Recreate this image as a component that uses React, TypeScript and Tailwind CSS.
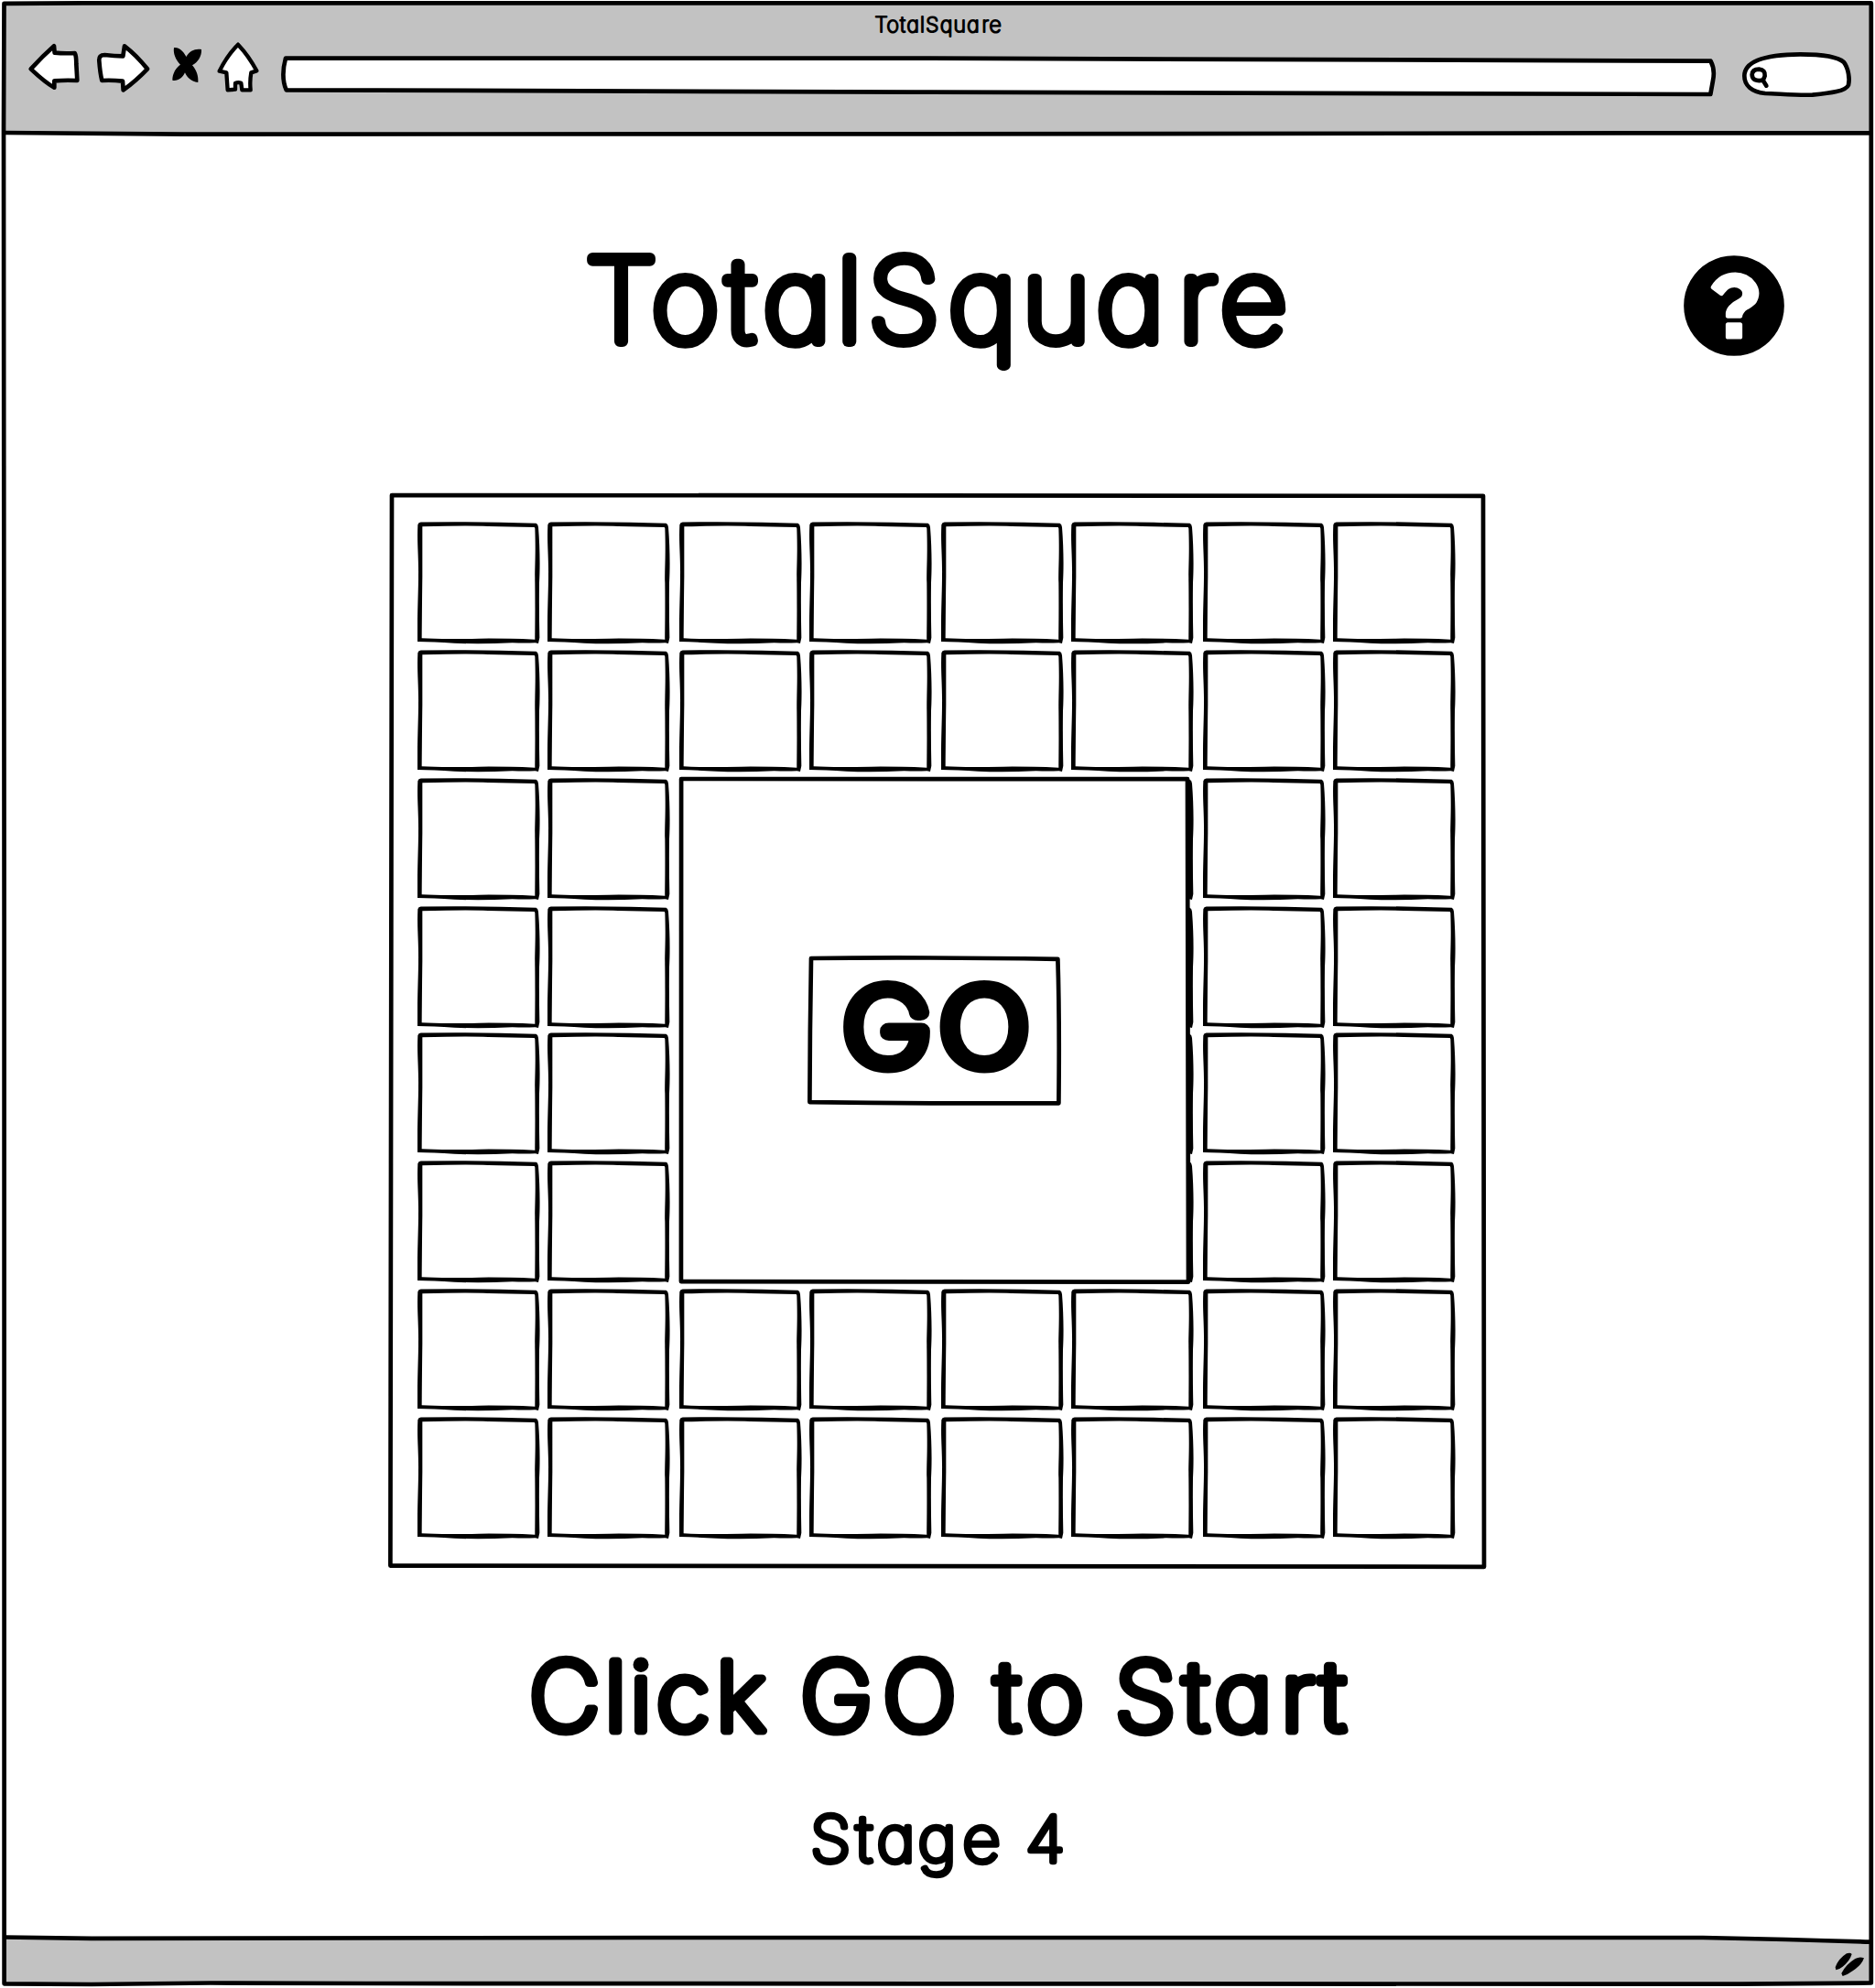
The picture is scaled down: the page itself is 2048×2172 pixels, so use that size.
import React from "react";

type Glyph = [char: string, center: number];

/** Rounded marker lettering: every glyph is centred on its own x position. */
function Lettering({
  glyphs,
  width,
  height,
  baseline,
  size,
  stroke,
  weight = 100,
  squeeze = 1,
  className = "",
}: {
  glyphs: Glyph[];
  width: number;
  height: number;
  baseline: number;
  size: number;
  stroke: number;
  weight?: number;
  squeeze?: number;
  className?: string;
}) {
  return (
    <svg
      viewBox={`0 0 ${width} ${height}`}
      className={`block overflow-visible font-['Inter',sans-serif] ${className}`}
    >
      <text
        transform={`scale(${squeeze} 1)`}
        x={glyphs.map((g) => (g[1] / squeeze).toFixed(2)).join(" ")}
        y={baseline}
        fontSize={size}
        fontWeight={weight}
        fill="#000"
        stroke="#000"
        strokeWidth={stroke}
        strokeLinejoin="round"
        textAnchor="middle"
        className="[font-feature-settings:'cv11']"
      >
        {glyphs.map((g) => g[0]).join("")}
      </text>
    </svg>
  );
}

const title: Glyph[] = [
  ["T", 41.5], ["o", 111.4], ["t", 172], ["a", 233.5], ["l", 290.8], ["S", 350.3],
  ["q", 436], ["u", 516.8], ["a", 597.6], ["r", 671], ["e", 732.2],
];

const prompt: Glyph[] = [
  ["C", 36.6], ["l", 92.2], ["i", 120], ["c", 166], ["k", 229.3], [" ", 280],
  ["G", 333.8], ["O", 424.3], [" ", 480], ["t", 520.2], ["o", 572.4], [" ", 620],
  ["S", 671], ["t", 726.1], ["a", 777.9], ["r", 837.5], ["t", 875.6],
];

const stage: Glyph[] = [
  ["S", 23.3], ["t", 59.8], ["a", 94.5], ["g", 139.6], ["e", 188], [" ", 222], ["4", 257.5],
];

const go: Glyph[] = [["G", 84], ["O", 190.2]];

function Title({ className }: { className: string }) {
  return (
    <Lettering glyphs={title} width={770} height={140} baseline={107} size={125} stroke={12} squeeze={1.02} className={className} />
  );
}

/** A hand-drawn rectangle outline filling its parent; `bow` is how far the sides bend. */
function SketchFrame({ w, h, bow = 1 }: { w: number; h: number; bow?: number }) {
  return (
    <svg viewBox={`0 0 ${w} ${h}`} className="pointer-events-none absolute inset-0 h-full w-full overflow-visible">
      <path
        d={`M${bow} 0 Q${w * 0.4} ${-1.5 * bow} ${w - 1} ${0.8 * bow} Q${w + bow} ${h * 0.4} ${w} ${h + 0.8 * bow} Q${w * 0.5} ${h + 1.4 * bow} ${-0.6 * bow} ${h - 0.4} Q${-0.4 * bow} ${h * 0.5} ${bow} 0Z`}
        fill="#fff"
        stroke="#000"
        strokeWidth="4.7"
        strokeLinejoin="round"
      />
    </svg>
  );
}

function Cell() {
  return (
    <svg viewBox="169 150 402 402" className="block h-[134px] w-[134px]">
      <path
        fill="#000"
        d="M170 160Q172 152 180 151.500Q320 149 440 152.500L558 155.500Q564 158 565 168C570 230 571 300 568 350Q567 450 569 530L565 549L555 547Q520 548 480 547Q370 552 290 548Q220 544 169 543C168 450 172 380 172 330C173 260 167 220 170 160Z"
      />
      <path
        fill="#fff"
        d="M185 166Q330 162 400 165Q470 166 552 168L554 172C557 260 553 300 554 350C555 450 554 500 554 536Q450 532 370 533Q250 536 183 532Q184 400 185 330Z"
      />
    </svg>
  );
}

function Toolbar() {
  return (
    <header className="flex h-[145px] flex-col">
      <div className="flex h-[48px] justify-center pt-[16px]">
        <Title className="h-[25.3px] w-[139px]" />
      </div>
      <div className="flex items-start pl-[30px]">
        <svg viewBox="90 138 176 166" className="-mt-[2px] block h-[55.33px] w-[58.67px]" fill="#fff" stroke="#000" strokeWidth="14" strokeLinejoin="round">
          <path d="M101 226Q140 184 177 151L179 173Q210 176 245 174Q250 182 250 210L253 264Q215 262 178 265L178 287Q150 272 101 226Z" />
        </svg>
        <svg viewBox="314 138 180 166" className="-mt-[2px] ml-[16px] block h-[55.33px] w-[60px]" fill="#fff" stroke="#000" strokeWidth="14" strokeLinejoin="round">
          <path d="M324 200Q322 180 342 180Q375 184 402 184L407 151Q445 180 482 226Q445 265 403 295L401 266Q365 262 333 264Q327 240 324 200Z" />
        </svg>
        <svg viewBox="560 138 104 166" className="-mt-[2px] ml-[22px] block h-[55.33px] w-[34.67px]">
          <path d="M569 156C590 154 604 175 609 186C620 166 640 158 659 162C661 185 646 205 629 214C643 230 650 250 648 270C623 268 610 250 605 238C598 255 580 267 564 263C564 240 576 222 590 212C574 195 566 175 569 156Z" />
        </svg>
        <svg viewBox="708 134 144 170" className="-mt-[3.33px] ml-[14.67px] block h-[56.67px] w-[48px]" fill="#fff" stroke="#000" strokeWidth="13" strokeLinejoin="round">
          <path d="M780 145Q815 182 841 231L823 237Q818 265 821 294L793 294L790 271Q780 267 771 272L771 292L746 294L742 237L719 232Q745 180 780 145Z" />
        </svg>
        <svg viewBox="304 56 1572 52" className="ml-[20px] mt-[8px] block h-[52px] w-[1572px]" fill="#fff" stroke="#000" strokeWidth="4.7" strokeLinejoin="round">
          <path d="M312 63.5L1000 63.6L1868.500 66.6Q1873.500 76 1871 88L1868.300 103L1000 100.6L312.700 98.3Q306.500 84 312 63.5Z" />
        </svg>
        <svg viewBox="244 166 366 160" className="ml-[25.33px] mt-[7.33px] block h-[53.33px] w-[122px]" fill="#fff" stroke="#000" strokeWidth="14" strokeLinejoin="round" strokeLinecap="round">
          <path d="M257 250C257 200 325 180 440 179C520 179 567 190 583 205C598 225 603 260 598 280C590 300 540 306 480 312C420 314 360 307 325 307C280 302 257 280 257 250Z" />
          <path strokeWidth="14" d="M318 264Q283 270 282 246Q283 228 305 228Q326 230 324 250Q322 258 317 263L329 282" />
        </svg>
      </div>
    </header>
  );
}

function Chrome() {
  return (
    <svg viewBox="0 0 2048 2172" className="pointer-events-none absolute inset-0 block h-[2172px] w-[2048px]" fill="none" stroke="#000" strokeWidth="4.7">
      <path fill="#c2c2c2" stroke="none" d="M4 3H2044V146H4ZM4 2117L168 2118L1880 2117L2044 2121V2168H4Z" />
      <path strokeLinejoin="round" d="M4.5 3.8L90 3.4L2043.8 3.4L2043.8 1000L2043.8 2166.5L1900 2167.7L400 2167L230 2166.5L100 2168L4.6 2167.3L4.6 2080Q3 1600 4.6 1000L4 140Z" />
      <path d="M5 145Q100 146 200 146.6L1000 146.4Q1500 146 1880 145.3H2043M5 2116.5L100 2117.8L700 2117L1860 2117Q1960 2119 2043 2121.7" />
    </svg>
  );
}

export default function App() {
  return (
    <div className="relative h-[2172px] w-[2048px] overflow-hidden bg-white">
      <Chrome />
      <div className="relative flex h-full flex-col">
        <Toolbar />
        <main className="flex flex-1 flex-col">
          <div className="flex h-[396px] pl-[637px] pt-[121px]">
            <Title className="h-[140px] w-[770px]" />
            <svg viewBox="0 0 1792 1792" className="ml-[423px] mt-[4px] block h-[128px] w-[128px]">
              <path d="M1024 1376v-192q0-14-9-23t-23-9h-192q-14 0-23 9t-9 23v192q0 14 9 23t23 9h192q14 0 23-9t9-23zm256-672q0-88-55.5-163t-138.5-116-170-41q-243 0-371 213-15 24 8 42l132 100q7 6 19 6 16 0 25-12 53-68 86-92 34-24 86-24 48 0 85.5 26t37.5 59q0 38-20 61t-68 45q-63 28-115.5 86.5t-52.5 125.5v36q0 14 9 23t23 9h192q14 0 23-9t9-23q0-19 21.5-49.5t54.5-49.5q32-18 49-28.5t46-35 44.5-48 28-60.5 12.5-81zm384 192q0 209-103 385.5t-279.5 279.5-385.5 103-385.5-103-279.5-279.5-103-385.5 103-385.5 279.5-279.5 385.5-103 385.5 103 279.5 279.5 103 385.5z" />
            </svg>
          </div>
          <section className="relative ml-[427px] grid h-[1170px] w-[1194px] pl-[29.3px] pt-[29.3px]">
            <SketchFrame w={1194} h={1170} />
            <div className="relative col-start-1 row-start-1 grid grid-cols-[142px_144px_142px_144px_142px_144px_142px_134px] grid-rows-[140px_140px_140px_138px_140px_140px_140px_134px]">
              {Array.from({ length: 64 }, (_, i) => (
                <Cell key={i} />
              ))}
            </div>
            <div className="relative col-start-1 row-start-1 ml-[288.2px] mt-[281px] flex h-[549.5px] w-[554px] pl-[140.7px] pt-[195.7px]">
              <SketchFrame w={554} h={549.5} bow={0.1} />
              <button className="relative h-[157.5px] w-[271.4px]">
                <SketchFrame w={271.4} h={157.5} />
                <Lettering glyphs={go} width={271.4} height={157.5} baseline={116.5} size={113} stroke={17} squeeze={1.14} className="relative h-[157.5px] w-[271.4px]" />
              </button>
            </div>
          </section>
          <div className="flex flex-col items-start">
            <Lettering glyphs={prompt} width={900} height={110} baseline={90.3} size={105} stroke={9.2} weight={150} squeeze={1.02} className="ml-[580px] mt-[90px] h-[110px] w-[900px]" />
            <Lettering glyphs={stage} width={280} height={90} baseline={62.5} size={69} stroke={6.5} squeeze={1.04} className="ml-[884px] mt-[60px] h-[90px] w-[280px]" />
          </div>
        </main>
        <footer className="flex h-[52px] justify-end pr-[10px] pt-[12px]">
          <svg viewBox="370 158 104 86" className="block h-[28.67px] w-[34.67px]">
            <path d="M375 210Q385 182 412 165Q424 160 429 167Q422 190 399 208Q388 217 377 219ZM395 230Q408 202 440 182Q455 174 469 180Q462 202 432 222Q415 235 399 239Z" />
          </svg>
        </footer>
      </div>
    </div>
  );
}
